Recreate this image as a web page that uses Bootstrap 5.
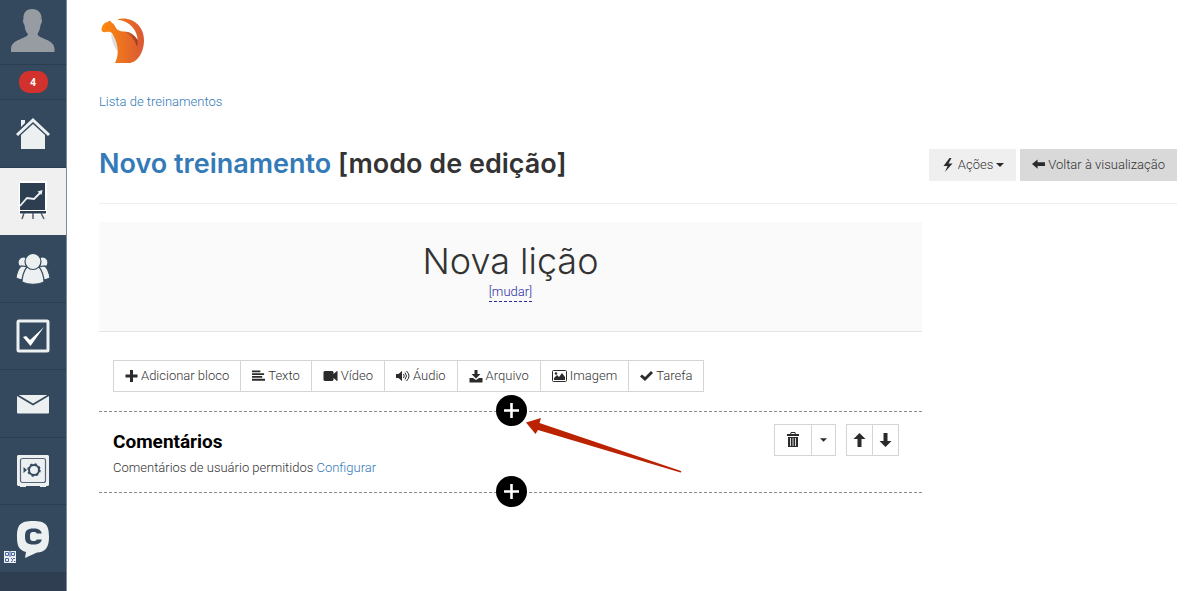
<!DOCTYPE html>
<html lang="pt">
<head>
<meta charset="utf-8">
<meta name="viewport" content="width=device-width, initial-scale=1">
<title>Novo treinamento</title>
<link href="https://cdn.jsdelivr.net/npm/bootstrap@5.3.0/dist/css/bootstrap.min.css" rel="stylesheet">
<style>
body{font-family:Roboto,"Liberation Sans",sans-serif;font-size:13px;line-height:20px;color:#333;background:#fff}
a{color:#337ab7;text-decoration:none}
.thin{font-weight:300}
.sidebar{flex:0 0 67px;background:#2f3e50;border-right:1px solid #7d8c9c}
.side-item{background:#34495e;border-bottom:1px solid #2b3d50;display:flex;align-items:center;justify-content:center;position:relative}
.side-item:nth-child(odd){height:68px}
.side-item:nth-child(even){height:67px}
.side-item.avatar{height:65px;align-items:flex-start}
.side-item.notice{height:35px}
.side-item.current{background:#f0f0f0;border-color:#f0f0f0}
.count{background:#d2322d;color:#fff;font:700 10px/22px "Open Sans",sans-serif;width:29px;height:22px;border-radius:10px;text-align:center}
.qr{position:absolute;left:4px;bottom:9px}
main{padding:15px 22px 40px 32px;min-width:0}
.crumb-bar{margin-top:27px}
.page-head{margin-top:37px;padding-bottom:22px;border-bottom:1px solid #eee}
.page-title{font-family:Inter,Roboto,sans-serif;font-weight:600;font-size:27px;line-height:30px}
.btn{--bs-btn-font-size:13px;--bs-btn-line-height:20px;--bs-btn-border-radius:0;--bs-btn-padding-y:5px;--bs-btn-padding-x:11px;--bs-btn-color:#333;font-weight:300;display:inline-flex;align-items:center;gap:3px;white-space:nowrap}
.btn-act{--bs-btn-bg:#efefef;--bs-btn-border-color:#efefef}
.btn-back{--bs-btn-bg:#d9d9d9;--bs-btn-border-color:#d9d9d9}
.btn-line{--bs-btn-border-color:#d4d4d4;--bs-btn-bg:#fff}
.btn svg{fill:#2b2b2b;flex:none}
.aside-space{flex:0 0 255px}
.lesson{background:#fafafa;border-bottom:1px solid #e6e6e6;height:110px;padding-top:18px;margin-top:18px}
.lesson h2{font-family:Inter,sans-serif;font-weight:300;font-size:36px;line-height:42px}
.change{color:#2a2aa5;border-bottom:1px dashed #2a2aa5;line-height:18px}
.blocks{margin:28px 14px 19px}
.tools .btn{height:32px}
.insert{border-top:1px dashed #8a8a8a;position:relative}
.insert button{position:absolute;left:50%;top:-17px;margin-left:-15px;width:31px;height:31px;border:0;padding:0;border-radius:50%;background:#000;display:flex}
.pointer{position:absolute;left:50%;top:2px;margin-left:15px;z-index:2;pointer-events:none}
.comment{padding:12px 23px 15px 14px;height:80px}
.comment-title{font-weight:700;font-size:19px;line-height:24px;color:#000;margin:6px 0 4px}
.comment .tools{gap:10px}
.comment .btn{--bs-btn-padding-x:6px}
.comment .btn.trash{--bs-btn-padding-x:11px}
.comment .btn.drop{--bs-btn-padding-x:8px}
</style>
</head>
<body>
<div class="d-flex min-vh-100">
<nav class="sidebar" aria-label="Menu">
<a class="side-item avatar" href="#" aria-label="Perfil"><svg width="66" height="64" viewBox="0 0 66 64"><path fill="#979ca2" d="M32 9c6 0 10 4 9.500 10c1 1 .5 4-1 6c-.5 5-2 7-3 9c1 5 17 5 17 15v3H11v-3c0-10 16-10 17-15c-2-2-3-4-3.500-9c-1.500-2-2-5-1-6c-.5-6 2.500-10 8.500-10z"/></svg></a>
<a class="side-item notice" href="#"><span class="count">4</span></a>
<a class="side-item" href="#" aria-label="Início"><svg width="36" height="34" viewBox="0 0 36 34" fill="#ecf0f1"><path d="M6 3h4v3L6 10zM1 17L18 1l17 16-2 2L18 5 3 19zM6 18L18 7l12 11v14H6z"/></svg></a>
<a class="side-item current" href="#" aria-label="Treinamentos"><svg width="28" height="40" viewBox="0 0 28 40"><path fill="#fff" d="M0 0h28v34H0z"/><path fill="#2c3e50" d="M1 2h25v27H1zM1 30h26v2.500H1z"/><path d="M1 25l7-8 7 1 7-7" fill="none" stroke="#eef2f4" stroke-width="1.800"/><path d="M18.500 10.500l5-1.500-1 5z" fill="#eef2f4"/><path d="M5 32l-2 6M14 32v6M22 32l3 6" stroke="#52606d" stroke-width="1.500"/></svg></a>
<a class="side-item" href="#" aria-label="Usuários"><svg width="34" height="32" viewBox="0 0 34 32" fill="#ecf0f1" stroke="#34495e" stroke-width="1.200"><circle cx="7.500" cy="9.500" r="5.500"/><circle cx="26.500" cy="9.500" r="5.500"/><path d="M5 13Q1 17 0 25q4 2 8 2l5-13zM29 13q4 4 5 12q-4 2-8 2l-5-13z"/><path d="M11 14c-3 3-5 10-5 15c6 3 16 3 22 0c0-5-2-12-5-15z"/><circle cx="17" cy="8.500" r="8"/></svg></a>
<a class="side-item" href="#" aria-label="Tarefas"><svg width="34" height="34" viewBox="0 0 34 34"><rect x="2" y="2" width="30" height="30" rx="1" fill="none" stroke="#ecf0f1" stroke-width="3"/><path fill="#fff" d="M7 18l3-1 4 4L28 8 14.500 27z"/></svg></a>
<a class="side-item" href="#" aria-label="Mensagens"><svg width="34" height="20" viewBox="0 0 34 20"><rect x="1" y="1" width="32" height="18.500" rx="1" fill="#ecf0f1"/><path d="M1 1l16 9.500L33 1" fill="none" stroke="#34495e" stroke-width="1.800"/></svg></a>
<a class="side-item" href="#" aria-label="Cofre"><svg width="34" height="34" viewBox="0 0 34 34"><path fill="#ecf0f1" d="M2 1h30l1 1v29l-1 1h-2v1h-6v-1H10v1H4v-1H2l-1-1V2z"/><rect x="4.500" y="4.500" width="25" height="24" rx="2" fill="none" stroke="#546579" stroke-width="1.200"/><circle cx="18" cy="16" r="5" fill="none" stroke="#34495e" stroke-width="2"/><circle cx="18" cy="16" r="6" fill="none" stroke="#34495e" stroke-width="1.500" stroke-dasharray="2.300 2.400"/><path fill="#34495e" d="M7.500 13l3.500 3-3.500 3z"/></svg></a>
<a class="side-item" href="#" aria-label="Chat"><svg width="34" height="38" viewBox="0 0 34 38"><path fill="#ecf0f1" d="M17 1c13 0 16 4 16 16c0 11-4 15-12 15.500L9 38l1-6C3 30 1 26 1 17C1 5 4 1 17 1z"/><path d="M25.800 13.500c-.8-3.500-3-5-8.300-5c-6.500 0-8.500 2-8.500 8c0 6 2 8 8.500 8c5.300 0 7.500-1.500 8.300-5h-5c-.6 1.200-1.300 1.500-3.300 1.500c-2.800 0-3.500-1-3.500-4.500c0-3.500.7-4.500 3.500-4.500c2 0 2.700.3 3.300 1.500z" fill="#34495e"/></svg><svg class="qr" width="12" height="12" viewBox="0 0 12 12"><path fill="#eee" d="M0 0h12v12H0z"/><path d="M1.500 1.500h3v3h-3zM7.500 1.500h3v3h-3zM1.500 7.500h3v3h-3zM7 7l2 2M9 7.500h2M7 11l2-1.500M10 10.500h1.500M6 0v6" fill="none" stroke="#4867a5"/></svg></a>
</nav>
<main class="flex-grow-1">
<a class="d-block" href="#" aria-label="Página inicial"><svg class="d-block" width="48" height="50" viewBox="0 0 48 50"><defs><linearGradient id="og"><stop stop-color="#ff8a0c"/><stop offset="1" stop-color="#d95835"/></linearGradient><linearGradient id="sh"><stop stop-color="#9e3c25" stop-opacity=".1"/><stop offset="1" stop-color="#8e351f" stop-opacity=".8"/></linearGradient></defs><path fill="#dedede" d="M12 19c1 9 4 15 8 19l-1-13z"/><path fill="url(#og)" d="M2.500 15c0-4 2-7 6-8L11 5.500l2 2.500c3 1 3 5 6 7c2 1 4 1.500 6 1.500c6 0 10 3 13.500 8.500c0-9-7-19-20.500-20.500c14-4 27 6 27 20.500c0 14-8 23-15 23H16c4-8 4-18-2-28c-1-2-2-3-3-3c-3-.5-5 .5-7 0q-1.500-1-1.500-2z"/><path fill="url(#sh)" d="M25 16.500c6 0 10 3 13.500 8.500q.5 4-.5 7c-2-7-6-12-13-15.500z"/></svg></a>
<nav class="crumb-bar" aria-label="Trilha"><a class="thin" href="#">Lista de treinamentos</a></nav>
<header class="page-head d-flex justify-content-between align-items-start">
<h1 class="page-title mb-0"><a href="#">Novo treinamento</a> [modo de edição]</h1>
<div class="d-flex gap-1">
<button class="btn btn-act" type="button"><svg width="14" height="14" viewBox="0 0 14 14"><path d="M8.500 0L2.500 8h4L4 14l7.500-8.500H7.500L10.500 0z"/></svg>Ações<svg width="8" height="4" viewBox="0 0 8 4"><path d="M0 0h8L4 4z"/></svg></button>
<button class="btn btn-back" type="button"><svg width="13" height="14" viewBox="0 0 14 14"><path d="M0 6l6-5v3h8v4H6v3z"/></svg>Voltar à visualização</button>
</div>
</header>
<div class="d-flex">
<div class="flex-grow-1">
<section class="lesson text-center">
<h2 class="mb-0">Nova lição</h2>
<a class="change thin d-inline-block" href="#">[mudar]</a>
</section>
<div class="blocks d-flex">
<div class="btn-group tools" role="group" aria-label="Blocos">
<button class="btn btn-line" type="button"><svg width="13" height="12" viewBox="0 0 12 12"><path d="M4.500 0h3v4.500H12v3H7.500V12h-3V7.500H0v-3h4.500z"/></svg>Adicionar bloco</button>
<button class="btn btn-line" type="button"><svg width="13" height="12" viewBox="0 0 14 12"><path d="M0 0h9v2H0zM0 3h13v2H0zM0 6h11v2H0zM0 9h14v2H0z"/></svg>Texto</button>
<button class="btn btn-line" type="button"><svg width="15" height="12" viewBox="0 0 14 12"><path d="M1 1h8l1 1v2l3.500-3H14v10h-.5L10 8v2l-1 1H1l-1-1V2z"/></svg>Vídeo</button>
<button class="btn btn-line" type="button"><svg width="14" height="12" viewBox="0 0 14 12"><path d="M0 4h2.500L6 1v10L2.500 8H0z"/><path d="M7.500 4q1.500 2 0 4M9 2.500q3 3.500 0 7M10.500 1q5 5 0 10" fill="none" stroke="#2b2b2b"/></svg>Áudio</button>
<button class="btn btn-line" type="button"><svg width="14" height="13" viewBox="0 0 13 13"><path d="M5 0h3v4h3L6.500 8.500 2 4h3zM0 8h3.500l3 2 3-2H13v4.500H0z"/></svg>Arquivo</button>
<button class="btn btn-line" type="button"><svg width="15" height="12" viewBox="0 0 15 12"><rect x=".5" y=".5" width="14" height="11" rx="1" fill="none" stroke="#2b2b2b"/><path d="M2 10V8l3-3 2 2 3-4 3 4v3z"/><circle cx="4" cy="3.500" r="1.300"/></svg>Imagem</button>
<button class="btn btn-line" type="button"><svg width="13" height="12" viewBox="0 0 13 12"><path d="M0 6.500l2-2L5 7l6-6 2 2-8 8z"/></svg>Tarefa</button>
</div>
</div>
<div class="insert">
<button type="button" aria-label="Inserir bloco"><svg width="31" height="31" viewBox="0 0 31 31"><path d="M15.500 8v15M8 15.500h15" stroke="#fff" stroke-width="2.600"/></svg></button>
<svg class="pointer" width="158" height="60" viewBox="0 0 158 60"><path fill="#bb2200" d="M0 8.500L15 4l-1.500 5L155 57q1 1-.5 1.500L12 16l-2.500 4z"/></svg>
</div>
<section class="comment d-flex justify-content-between align-items-start">
<div><h3 class="comment-title">Comentários</h3><p class="thin mb-0">Comentários de usuário permitidos <a href="#">Configurar</a></p></div>
<div class="d-flex tools">
<div class="btn-group"><button class="btn btn-line trash" type="button" aria-label="Excluir"><svg width="14" height="16" viewBox="0 0 14 16"><path d="M1 2h3l1-2h4l1 2h3v2H1zM5 2h4l-.5-1h-3zM2 5h10v10H2z" fill-rule="evenodd"/><path d="M4.500 6v8M7 6v8M9.500 6v8" stroke="#ddd"/></svg></button><button class="btn btn-line drop" type="button" aria-label="Mais opções"><svg width="7" height="4" viewBox="0 0 8 4"><path d="M0 0h8L4 4z"/></svg></button></div>
<div class="btn-group"><button class="btn btn-line" type="button" aria-label="Mover para cima"><svg width="13" height="14" viewBox="0 0 12 14"><path d="M6 0l6 6H8v8H4V6H0z"/></svg></button><button class="btn btn-line" type="button" aria-label="Mover para baixo"><svg width="13" height="14" viewBox="0 0 12 14"><path d="M6 14l6-6H8V0H4v8H0z"/></svg></button></div>
</div>
</section>
<div class="insert"><button type="button" aria-label="Inserir bloco no fim"><svg width="31" height="31" viewBox="0 0 31 31"><path d="M15.500 8v15M8 15.500h15" stroke="#fff" stroke-width="2.600"/></svg></button></div>
</div>
<div class="aside-space"></div>
</div>
</main>
</div>
<script src="https://cdn.jsdelivr.net/npm/bootstrap@5.3.0/dist/js/bootstrap.bundle.min.js"></script>
</body>
</html>
